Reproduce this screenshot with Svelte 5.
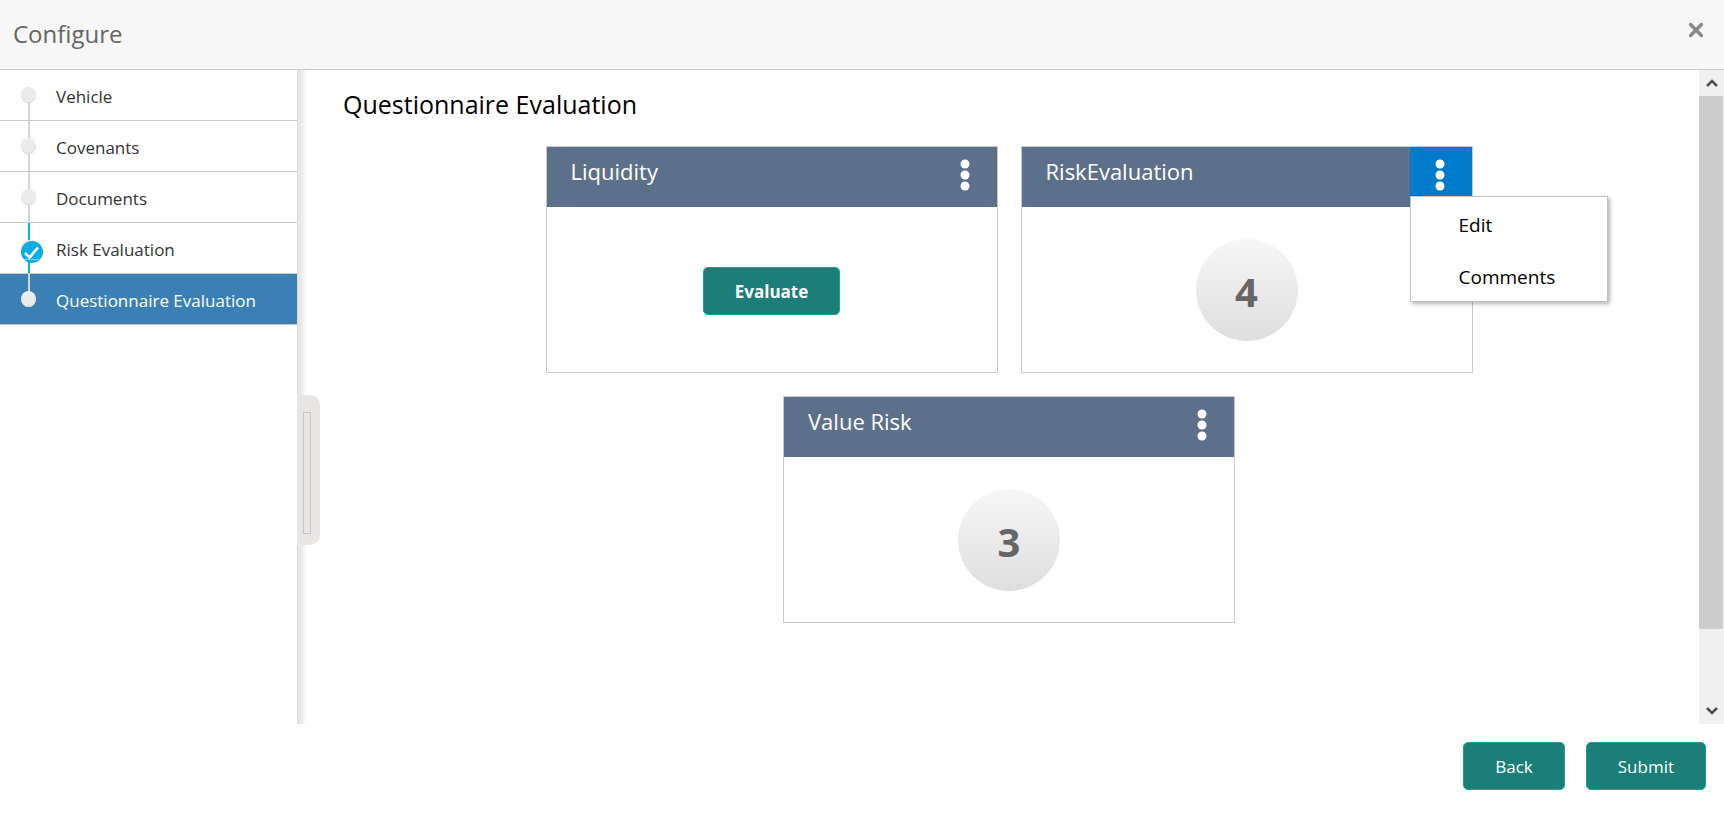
<script>
	let steps = [
		{ label: 'Vehicle', state: 'todo' },
		{ label: 'Covenants', state: 'todo' },
		{ label: 'Documents', state: 'todo' },
		{ label: 'Risk Evaluation', state: 'done' },
		{ label: 'Questionnaire Evaluation', state: 'active' }
	];

	let cards = [
		{ title: 'Liquidity', score: null },
		{ title: 'RiskEvaluation', score: 4 },
		{ title: 'Value Risk', score: 3 }
	];

	let openMenu = $state(1);

	const toggleMenu = (index) => {
		openMenu = openMenu === index ? -1 : index;
	};

	const closeMenu = () => {
		openMenu = -1;
	};
</script>

<div class="dialog">
	<header class="header">
		<h1>Configure</h1>
		<button class="close-btn" aria-label="Close">
			<svg width="16" height="16" viewBox="0 0 16 16">
				<path
					d="M2.6 2.6 L13.4 13.4 M13.4 2.6 L2.6 13.4"
					stroke="#878b90"
					stroke-width="3.6"
					stroke-linecap="round"
				/>
			</svg>
		</button>
	</header>

	<div class="body">
		<nav class="sidebar">
			<ol>
				{#each steps as { label, state }}
					<li class={state}>
						<span class="marker">
							<span class="dot"></span>
							{#if state === 'done'}
								<svg class="check" width="22" height="22" viewBox="0 0 22 22">
									<circle cx="11" cy="11" r="11" fill="#0cade4" />
									<path d="M4 12 L8.5 16.5 L17 6.5" fill="none" stroke="#fff" stroke-width="2.6" />
									<path d="M3 18.5 H18" stroke="#7fd3f2" stroke-width="1" />
								</svg>
							{/if}
						</span>
						<a href="#step">{label}</a>
					</li>
				{/each}
			</ol>
		</nav>

		<div class="splitter">
			<button class="handle" aria-label="Collapse steps"><span></span></button>
		</div>

		<main class="content">
			<h2>Questionnaire Evaluation</h2>
			<div class="cards">
				{#each cards as { title, score }, index}
					<section class="card">
						<div class="card-head">
							<h3>{title}</h3>
							<button
								class="menu-btn"
								class:open={openMenu === index}
								aria-label="{title} actions"
								aria-expanded={openMenu === index}
								onclick={() => toggleMenu(index)}
							>
								<svg width="10" height="32" viewBox="0 0 10 32" fill="#fff">
									<circle cx="5" cy="5" r="4.5" />
									<circle cx="5" cy="16" r="4.5" />
									<circle cx="5" cy="27" r="4.5" />
								</svg>
							</button>
							{#if openMenu === index}
								<div class="menu">
									<button onclick={closeMenu}>Edit</button>
									<button onclick={closeMenu}>Comments</button>
								</div>
							{/if}
						</div>
						<div class="card-body">
							{#if score === null}
								<button class="btn strong">Evaluate</button>
							{:else}
								<div class="score">{score}</div>
							{/if}
						</div>
					</section>
				{/each}
			</div>
		</main>

		<div class="scrollbar">
			<button aria-label="Scroll up">
				<svg width="12" height="10" viewBox="0 0 12 10">
					<path d="M1 8 L6 3 L11 8" fill="none" stroke="#505050" stroke-width="2.6" />
				</svg>
			</button>
			<div class="track"><div class="thumb"></div></div>
			<button aria-label="Scroll down">
				<svg width="12" height="10" viewBox="0 0 12 10">
					<path d="M1 2 L6 7 L11 2" fill="none" stroke="#505050" stroke-width="2.6" />
				</svg>
			</button>
		</div>
	</div>

	<footer class="footer">
		<button class="btn">Back</button>
		<button class="btn">Submit</button>
	</footer>
</div>

<style>
	:global(body) {
		margin: 0;
		background: #fff;
	}

	.dialog {
		display: flex;
		flex-direction: column;
		min-height: 100vh;
		font-family: 'Open Sans', 'Noto Sans', sans-serif;
		color: #000;
	}

	.dialog * {
		box-sizing: border-box;
	}

	button {
		font-family: inherit;
		border: none;
		padding: 0;
		cursor: pointer;
	}

	h1,
	h2,
	h3 {
		margin: 0;
		font-weight: 400;
	}

	.header {
		display: flex;
		justify-content: space-between;
		align-items: flex-start;
		padding: 16px 20px 17px 13px;
		background: #f7f7f7;
		border-bottom: 1px solid #c9cccf;
	}

	.header h1 {
		font-size: 24px;
		line-height: 36px;
		color: #666;
	}

	.close-btn {
		display: flex;
		margin-top: 6px;
		background: none;
	}

	.body {
		display: flex;
		flex: 1;
	}

	.sidebar {
		flex: 0 0 297px;
	}

	.sidebar ol {
		margin: 0;
		padding: 0;
		list-style: none;
	}

	.sidebar li {
		display: flex;
		height: 51px;
		border-bottom: 1px solid #cbcbc4;
	}

	.marker {
		position: relative;
		display: flex;
		justify-content: center;
		align-items: center;
		width: 56px;
		background: linear-gradient(#d6d6d6, #d6d6d6) 28px 0 / 2px 100% no-repeat;
	}

	.sidebar li:first-child .marker {
		background-size: 2px 26px;
		background-position: 28px 100%;
	}

	.done .marker {
		background-image: linear-gradient(#0cade4, #0cade4);
	}

	.dot {
		width: 15px;
		height: 16px;
		border-radius: 50%;
		background: #ebebeb;
		box-shadow: inset 0 -1px 1px #d8d8d8;
	}

	.check {
		position: absolute;
		left: 21px;
		top: 18px;
	}

	.sidebar a {
		flex: 1;
		line-height: 54px;
		font-size: 17px;
		color: #333;
		text-decoration: none;
	}

	.active {
		background: #3b80b5;
	}

	.active .marker {
		background-size: 2px 25px;
	}

	.active a {
		color: #fff;
	}

	.splitter {
		position: relative;
		flex: 0 0 10px;
		border-left: 1px solid #d5dfe4;
		background: linear-gradient(90deg, #e6e6e7 20%, #fff);
	}

	.handle {
		position: absolute;
		top: 50%;
		left: -1px;
		display: flex;
		width: 23px;
		height: 150px;
		padding: 17px 9px 11px 6px;
		margin-top: -2px;
		border-radius: 0 10px 10px 0;
		background: #e7e6e4;
	}

	.handle span {
		flex: 1;
		align-self: stretch;
		border: 1px solid #c6c6c6;
	}

	.content {
		flex: 1;
		padding: 16px 24px 24px 36px;
	}

	.content h2 {
		font-size: 25px;
		line-height: 36px;
	}

	.cards {
		display: flex;
		flex-wrap: wrap;
		justify-content: center;
		gap: 23px;
		margin-top: 24px;
	}

	.card {
		width: 452px;
		border: 1px solid #c9c9c9;
	}

	.card-head {
		position: relative;
		display: flex;
		justify-content: space-between;
		align-items: flex-start;
		height: 60px;
		padding-left: 24px;
		background: #5d708b;
		color: #fff;
	}

	.card-head h3 {
		font-size: 22px;
		line-height: 48px;
	}

	.menu-btn {
		display: flex;
		justify-content: center;
		align-items: center;
		width: 62px;
		height: 49px;
		padding: 7px 2px 0 0;
		background: none;
	}

	.menu-btn.open {
		background: #007acb;
	}

	.menu {
		position: absolute;
		top: 49px;
		left: 388px;
		z-index: 2;
		display: flex;
		flex-direction: column;
		width: 198px;
		border: 1px solid #c4c4c4;
		background: #fff;
		box-shadow: 2px 2px 4px rgba(0, 0, 0, 0.3);
	}

	.menu button {
		height: 52px;
		padding: 4px 0 0 48px;
		background: none;
		color: #000;
		font-size: 19px;
		text-align: left;
	}

	.card-body {
		display: flex;
		justify-content: center;
		align-items: center;
		height: 165px;
	}

	.score {
		width: 102px;
		height: 102px;
		padding-top: 2px;
		border-radius: 50%;
		background: linear-gradient(#f7f7f7, #dedede);
		color: #666;
		font-size: 40px;
		font-weight: 700;
		line-height: 102px;
		text-align: center;
	}

	.btn {
		height: 48px;
		padding: 1px 31px 0;
		border: 1px solid #12a594;
		border-radius: 5px;
		background: #1b7e79;
		color: #fff;
		font-size: 17px;
	}

	.strong {
		margin-top: 3px;
		font-weight: 700;
	}

	.scrollbar {
		display: flex;
		flex-direction: column;
		flex: 0 0 25px;
		background: #f0f0f0;
	}

	.scrollbar button {
		display: flex;
		justify-content: center;
		align-items: center;
		height: 26px;
		background: none;
	}

	.track {
		flex: 1;
	}

	.thumb {
		width: 24px;
		height: 533px;
		background: #cdcdcd;
	}

	.footer {
		display: flex;
		justify-content: flex-end;
		gap: 21px;
		padding: 18px 18px 23px;
	}
</style>
